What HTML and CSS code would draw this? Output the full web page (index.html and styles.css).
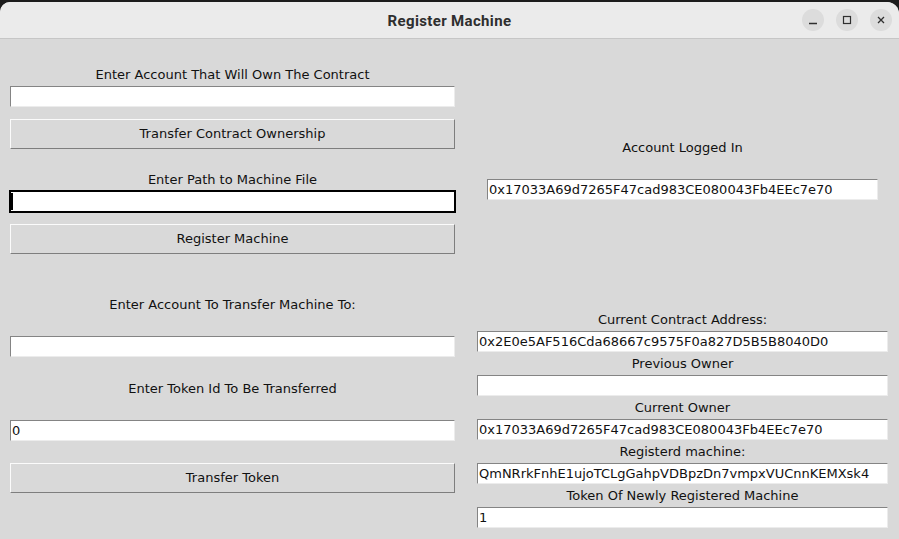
FILE: index.html
```html
<!DOCTYPE html>
<html>
<head>
<meta charset="utf-8">
<link rel="stylesheet" href="styles.css">
</head>
<body>
<div class="window">
  <div class="titlebar">
    <div class="spacer"></div>
    <div class="title">Register Machine</div>
    <div class="controls">
      <div class="ctl"><svg width="22" height="22" viewBox="0 0 22 22"><path d="M7 14.5h8" stroke="#2f2f2f" stroke-width="1.3"/></svg></div>
      <div class="ctl"><svg width="22" height="22" viewBox="0 0 22 22"><rect x="7.5" y="7.5" width="7" height="7" fill="none" stroke="#2f2f2f" stroke-width="1.2"/></svg></div>
      <div class="ctl"><svg width="22" height="22" viewBox="0 0 22 22"><path d="M8 8l6 6M14 8l-6 6" stroke="#2f2f2f" stroke-width="1.3"/></svg></div>
    </div>
  </div>
  <div class="content">
    <div class="left">
      <div class="label l1">Enter Account That Will Own The Contract</div>
      <div class="entry e-gap"></div>
      <div class="button b-gap">Transfer Contract Ownership</div>
      <div class="label l2">Enter Path to Machine File</div>
      <div class="entry e-gap focused"><span class="cursor"></span></div>
      <div class="button b-gap">Register Machine</div>
      <div class="label l3">Enter Account To Transfer Machine To:</div>
      <div class="entry e-gap2"></div>
      <div class="label l4">Enter Token Id To Be Transferred</div>
      <div class="entry e-gap2">0</div>
      <div class="button b-gap2">Transfer Token</div>
    </div>
    <div class="right">
      <div class="label r1">Account Logged In</div>
      <div class="entry narrow e-gap2">0x17033A69d7265F47cad983CE080043Fb4EEc7e70</div>
      <div class="label r2">Current Contract Address:</div>
      <div class="entry e-gap">0x2E0e5AF516Cda68667c9575F0a827D5B5B8040D0</div>
      <div class="label rn">Previous Owner</div>
      <div class="entry e-gap"></div>
      <div class="label rn">Current Owner</div>
      <div class="entry e-gap">0x17033A69d7265F47cad983CE080043Fb4EEc7e70</div>
      <div class="label rn">Registerd machine:</div>
      <div class="entry e-gap">QmNRrkFnhE1ujoTCLgGahpVDBpzDn7vmpxVUCnnKEMXsk4</div>
      <div class="label rn">Token Of Newly Registered Machine</div>
      <div class="entry e-gap">1</div>
    </div>
  </div>
</div>
</body>
</html>
```
FILE: styles.css
```css
html, body {
  margin: 0;
  padding: 0;
  background: #1c1c1c;
  width: 899px;
  height: 539px;
  overflow: hidden;
}
.window {
  margin-top: 2px;
  height: 537px;
  background: #d9d9d9;
  border-radius: 10px 12px 0 0;
  overflow: hidden;
  font-family: "DejaVu Sans", sans-serif;
  font-size: 13px;
  color: #111;
}
.titlebar {
  height: 36px;
  background: #ebebeb;
  border-bottom: 1px solid #c6c6c6;
  display: grid;
  grid-template-columns: 1fr auto 1fr;
  align-items: center;
}
.title {
  font-family: Roboto, "DejaVu Sans", sans-serif;
  font-weight: 700;
  font-size: 15px;
  letter-spacing: 0.35px;
  color: #2e2e2e;
  padding-top: 1px;
}
.controls {
  justify-self: end;
  display: flex;
  gap: 12px;
  padding-right: 7px;
}
.ctl {
  width: 22px;
  height: 22px;
  border-radius: 50%;
  background: #dcdcdc;
}
.ctl svg { display: block; }
.content {
  display: flex;
}
.left {
  margin-left: 10px;
  width: 445px;
  display: flex;
  flex-direction: column;
}
.right {
  margin-left: 22px;
  width: 411px;
  display: flex;
  flex-direction: column;
}
.label {
  height: 18px;
  line-height: 20px;
  text-align: center;
  white-space: nowrap;
}
.l1 { margin-top: 26px; }
.l2 { margin-top: 21px; }
.l3 { margin-top: 41px; }
.l4 { margin-top: 22px; }
.r1 { margin-top: 99px; }
.r2 { margin-top: 110px; }
.rn { margin-top: 2px; }
.entry {
  box-sizing: border-box;
  height: 21px;
  line-height: 19px;
  background: #fff;
  border: 1px solid;
  border-color: #848484 #ececec #ececec #848484;
  padding-left: 1px;
  white-space: nowrap;
  overflow: hidden;
  position: relative;
}
.narrow {
  margin-left: 10px;
  margin-right: 10px;
}
.e-gap { margin-top: 3px; }
.e-gap2 { margin-top: 23px; }
.focused {
  border-color: #000;
  box-shadow: 0 0 0 1px #000;
}
.cursor {
  position: absolute;
  left: 0px;
  top: 1px;
  width: 2px;
  height: 17px;
  background: #000;
}
.button {
  box-sizing: border-box;
  height: 30px;
  line-height: 28px;
  text-align: center;
  border: 1px solid;
  border-color: #fbfbfb #7e7e7e #7e7e7e #fbfbfb;
  background: #d9d9d9;
}
.b-gap { margin-top: 12px; }
.b-gap2 { margin-top: 22px; }
```
